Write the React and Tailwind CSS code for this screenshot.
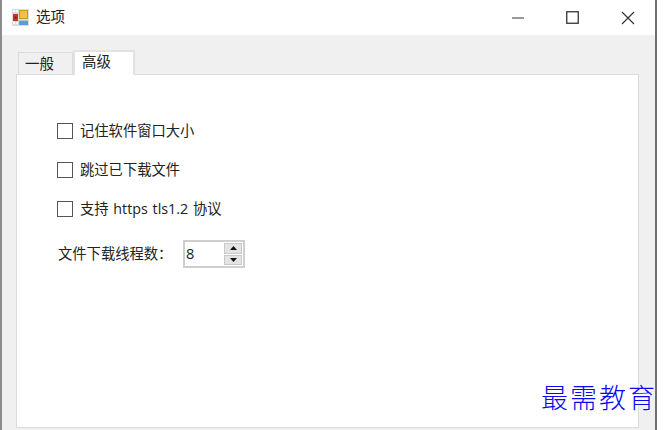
import React from "react";

const font = { fontFamily: '"Open Sans", "Noto Sans CJK SC", sans-serif' };

function AppIcon() {
  return (
    <svg width="17" height="17" viewBox="0 0 17 17" className="shrink-0">
      <rect x="0" y="0" width="17" height="17" fill="#dcdcdc" />
      <rect x="1" y="1" width="2" height="2" fill="#ffffff" />
      <rect x="4" y="1" width="2" height="2" fill="#ffffff" />
      <rect x="1" y="5" width="5" height="7" fill="#c8322c" />
      <rect x="2.5" y="7.5" width="2" height="2" fill="#8a1c18" />
      <rect x="1" y="13" width="2" height="2" fill="#ffffff" />
      <rect x="4" y="13" width="2" height="2" fill="#ffffff" />
      <rect x="7.5" y="1.5" width="8" height="8" fill="#f2c23c" stroke="#c99a20" strokeWidth="1" />
      <rect x="7" y="11" width="9" height="5" fill="#5b9be0" />
      <rect x="7" y="11" width="9" height="1" fill="#a9c8ee" />
    </svg>
  );
}

function CheckRow({ label }) {
  return (
    <label className="flex items-center h-[16px] text-[14.3px] leading-[16px] text-[#222222]">
      <span className="w-[16px] h-[16px] -ml-[1px] border-[1.5px] border-[#555555] bg-white shrink-0" />
      <span className="ml-[7px] whitespace-nowrap -mt-[1px] [word-spacing:1px]">{label}</span>
    </label>
  );
}

function Spinner() {
  return (
    <div className="flex w-[62px] h-[28px] border-2 border-[#cfcfcf] bg-white">
      <span className="flex-1 pl-[1px] text-[14.5px] leading-[24px] text-[#222222]">8</span>
      <div className="flex flex-col w-[18px] h-[22px] mt-[1px] mr-[1px] gap-[1px]">
        <button className="flex-1 flex items-center justify-center bg-[#e4e4e4] border border-[#c8c8c8]">
          <svg width="7" height="4" viewBox="0 0 7 4"><path d="M3.5 0 L7 4 L0 4 Z" fill="#111111" /></svg>
        </button>
        <button className="flex-1 flex items-center justify-center bg-[#e4e4e4] border border-[#c8c8c8]">
          <svg width="7" height="4" viewBox="0 0 7 4"><path d="M0 0 L7 0 L3.5 4 Z" fill="#111111" /></svg>
        </button>
      </div>
    </div>
  );
}

export default function App() {
  return (
    <div className="relative w-[663px] h-[430px] bg-white overflow-hidden" style={font}>
      <div className="w-[657px] h-[430px] flex flex-col border-l-2 border-r-2 border-l-[#8c8c8c] border-r-[#6e6e6e] bg-[#f0f0f0]">
        <div className="h-[35px] shrink-0 bg-white flex items-center pl-[10px]">
          <AppIcon />
          <span className="ml-[7px] text-[14.5px] leading-[20px] -mt-[2px] text-[#222222]">选项</span>
          <div className="ml-auto flex items-center text-[#222222]">
            <svg width="12" height="2" viewBox="0 0 12 2" className="mr-[42px]"><rect width="12" height="1" y="0.5" fill="#333333" /></svg>
            <svg width="13" height="13" viewBox="0 0 13 13" className="mr-[42px]"><rect x="0.75" y="0.75" width="11.5" height="11.5" fill="none" stroke="#333333" strokeWidth="1.3" /></svg>
            <svg width="14" height="14" viewBox="0 0 14 14" className="mr-[20px]"><path d="M1 1 L13 13 M13 1 L1 13" stroke="#333333" strokeWidth="1.2" fill="none" /></svg>
          </div>
        </div>
        <div className="flex-1 flex flex-col pl-[14px] pr-[16px] pt-[15px] pb-[2px]">
          <div className="flex h-[24px] items-end pl-[2px] relative z-10">
            <div className="w-[55px] h-[22px] bg-[#f0f0f0] border border-[#dcdcdc] border-b-0 text-[14.5px] leading-[22px] pl-[6px] text-[#222222]">一般</div>
            <div className="w-[62px] h-[25px] -mb-[1px] bg-white border-2 border-[#e2e2e2] border-b-0 text-[14.5px] leading-[19px] pl-[7px] text-[#222222]">高级</div>
          </div>
          <div className="flex-1 bg-white border border-[#dcdcdc] pl-[41px] pt-[48px]">
            <div className="flex flex-col gap-[23px]">
              <CheckRow label="记住软件窗口大小" />
              <CheckRow label="跳过已下载文件" />
              <CheckRow label="支持 https tls1.2 协议" />
            </div>
            <div className="flex items-center mt-[23px] text-[14.3px] text-[#222222]">
              <span className="w-[125px] whitespace-nowrap">文件下载线程数：</span>
              <Spinner />
            </div>
          </div>
        </div>
      </div>
      <div className="absolute left-[541px] top-[380px] text-[27px] leading-[36px] tracking-[2px] font-light text-[#0a0af0] whitespace-nowrap [text-shadow:0_0_3px_white,0_0_3px_white]">
        最需教育
      </div>
    </div>
  );
}
